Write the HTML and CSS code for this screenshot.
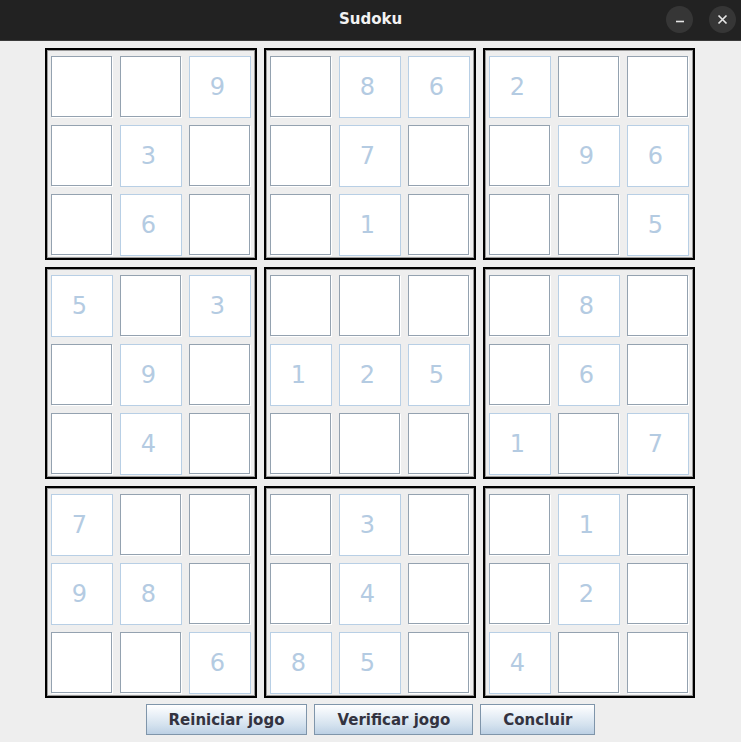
FILE: index.html
```html
<!DOCTYPE html>
<html>
<head>
<meta charset="utf-8">
<title>Sudoku</title>
<link rel="stylesheet" href="styles.css">
</head>
<body>
<div class="window">
  <header class="titlebar">
    <span class="title">Sudoku</span>
    <div class="controls">
      <span class="ctl"><svg width="10" height="10" viewBox="0 0 10 10"><line x1="1" y1="6.5" x2="9" y2="6.5" stroke="#e6e6e6" stroke-width="1.6"/></svg></span>
      <span class="ctl"><svg width="11" height="11" viewBox="0 0 11 11"><path d="M1.5 1.5 L9.5 9.5 M9.5 1.5 L1.5 9.5" stroke="#e6e6e6" stroke-width="1.7"/></svg></span>
    </div>
  </header>
  <main class="board">
    <div class="box"><div class="cell"></div><div class="cell"></div><div class="cell given">9</div><div class="cell"></div><div class="cell given">3</div><div class="cell"></div><div class="cell"></div><div class="cell given">6</div><div class="cell"></div></div>
    <div class="box"><div class="cell"></div><div class="cell given">8</div><div class="cell given">6</div><div class="cell"></div><div class="cell given">7</div><div class="cell"></div><div class="cell"></div><div class="cell given">1</div><div class="cell"></div></div>
    <div class="box"><div class="cell given">2</div><div class="cell"></div><div class="cell"></div><div class="cell"></div><div class="cell given">9</div><div class="cell given">6</div><div class="cell"></div><div class="cell"></div><div class="cell given">5</div></div>
    <div class="box"><div class="cell given">5</div><div class="cell"></div><div class="cell given">3</div><div class="cell"></div><div class="cell given">9</div><div class="cell"></div><div class="cell"></div><div class="cell given">4</div><div class="cell"></div></div>
    <div class="box"><div class="cell"></div><div class="cell"></div><div class="cell"></div><div class="cell given">1</div><div class="cell given">2</div><div class="cell given">5</div><div class="cell"></div><div class="cell"></div><div class="cell"></div></div>
    <div class="box"><div class="cell"></div><div class="cell given">8</div><div class="cell"></div><div class="cell"></div><div class="cell given">6</div><div class="cell"></div><div class="cell given">1</div><div class="cell"></div><div class="cell given">7</div></div>
    <div class="box"><div class="cell given">7</div><div class="cell"></div><div class="cell"></div><div class="cell given">9</div><div class="cell given">8</div><div class="cell"></div><div class="cell"></div><div class="cell"></div><div class="cell given">6</div></div>
    <div class="box"><div class="cell"></div><div class="cell given">3</div><div class="cell"></div><div class="cell"></div><div class="cell given">4</div><div class="cell"></div><div class="cell given">8</div><div class="cell given">5</div><div class="cell"></div></div>
    <div class="box"><div class="cell"></div><div class="cell given">1</div><div class="cell"></div><div class="cell"></div><div class="cell given">2</div><div class="cell"></div><div class="cell given">4</div><div class="cell"></div><div class="cell"></div></div>
  </main>
  <footer class="actions">
    <button class="btn">Reiniciar jogo</button>
    <button class="btn">Verificar jogo</button>
    <button class="btn">Concluir</button>
  </footer>
</div>
</body>
</html>
```
FILE: styles.css
```css
html, body {
  margin: 0;
  padding: 0;
  background: #eeeeee;
}
.window {
  width: 741px;
  height: 742px;
  overflow: hidden;
  background: #eeeeee;
  font-family: "DejaVu Sans", sans-serif;
}
.titlebar {
  position: relative;
  height: 41px;
  background: #222222;
  display: flex;
  align-items: center;
  justify-content: center;
  border-bottom: 1px solid #3a3a3a;
  box-sizing: border-box;
}
.title {
  color: #f2f2f2;
  font-weight: bold;
  font-size: 15px;
  margin-top: -2px;
}
.controls {
  position: absolute;
  right: 5px;
  top: 6px;
  display: flex;
  gap: 16px;
}
.ctl {
  width: 27px;
  height: 27px;
  border-radius: 50%;
  background: #363636;
  display: flex;
  align-items: center;
  justify-content: center;
}
.board {
  display: grid;
  grid-template-columns: repeat(3, 212px);
  grid-auto-rows: 212px;
  gap: 7px;
  justify-content: center;
  margin-top: 7px;
  padding-right: 1px;
}
.box {
  box-sizing: border-box;
  border: 2px solid #000;
  box-shadow: inset 0 0 0 1px #9a9a9a;
  padding: 6px 4px 2px 4px;
  display: grid;
  grid-template-columns: repeat(3, 62px);
  grid-template-rows: repeat(3, 62px);
  gap: 7px;
}
.cell {
  box-sizing: border-box;
  width: 61px;
  height: 61px;
  background: #ffffff;
  border: 1px solid #94a2b0;
  box-shadow: 1px 1px 0 #ffffff;
}
.cell.given {
  width: 62px;
  height: 62px;
  border-color: #b8cfe5;
  box-shadow: none;
  color: #b4cbe2;
  font-size: 24px;
  display: flex;
  align-items: center;
  justify-content: center;
  padding-right: 5px;
}
.actions {
  display: flex;
  justify-content: center;
  gap: 7px;
  margin-top: 6px;
}
.btn {
  height: 31px;
  padding: 0 22px;
  border: 1px solid #7f95aa;
  background: linear-gradient(to bottom, #ffffff 0%, #e9f0f7 35%, #d3e1ee 70%, #bcd0e4 100%);
  font-family: "DejaVu Sans", sans-serif;
  font-weight: bold;
  font-size: 15px;
  color: #333340;
  border-radius: 0;
}
```
